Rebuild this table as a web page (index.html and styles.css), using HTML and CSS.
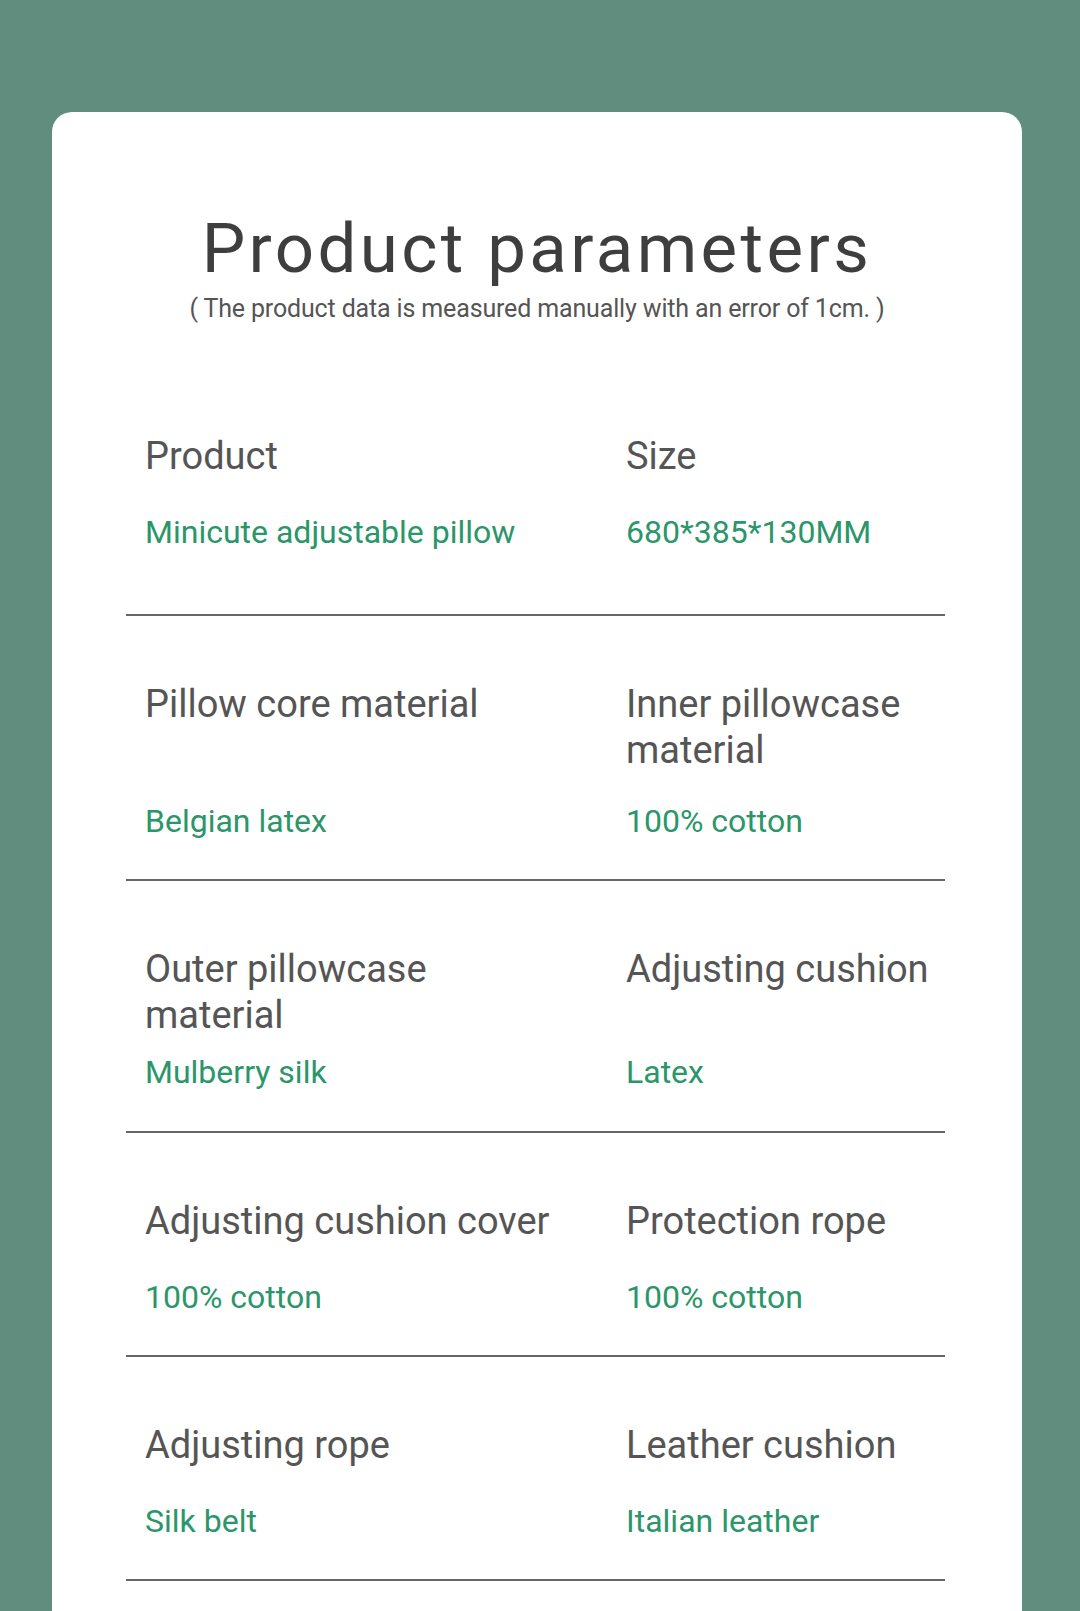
FILE: index.html
```html
<!DOCTYPE html>
<html lang="en">
<head>
<meta charset="utf-8">
<title>Product parameters</title>
<link rel="stylesheet" href="styles.css">
</head>
<body>
<div class="page">
  <main class="card">
    <header class="head">
      <h1 class="title">Product parameters</h1>
      <p class="note">( The product data is measured manually with an error of 1cm. )</p>
    </header>
    <section class="params">
      <div class="row row-first">
        <div class="label">Product</div>
        <div class="label">Size</div>
        <div class="value">Minicute adjustable pillow</div>
        <div class="value">680*385*130MM</div>
      </div>
      <div class="row row-second">
        <div class="label">Pillow core material</div>
        <div class="label">Inner pillowcase material</div>
        <div class="value">Belgian latex</div>
        <div class="value">100% cotton</div>
      </div>
      <div class="row row-third">
        <div class="label">Outer pillowcase material</div>
        <div class="label">Adjusting cushion</div>
        <div class="value">Mulberry silk</div>
        <div class="value">Latex</div>
      </div>
      <div class="row">
        <div class="label">Adjusting cushion cover</div>
        <div class="label">Protection rope</div>
        <div class="value">100% cotton</div>
        <div class="value">100% cotton</div>
      </div>
      <div class="row">
        <div class="label">Adjusting rope</div>
        <div class="label">Leather cushion</div>
        <div class="value">Silk belt</div>
        <div class="value">Italian leather</div>
      </div>
    </section>
  </main>
</div>
</body>
</html>
```
FILE: styles.css
```css
html, body {
  margin: 0;
  padding: 0;
}
body {
  background: #618d7f;
  font-family: Roboto, "Liberation Sans", sans-serif;
  height: 1611px;
  overflow: hidden;
}
.page {
  padding: 112px 58px 0 52px;
}
.card {
  background: #ffffff;
  border-radius: 20px 20px 0 0;
  min-height: 1499px;
  padding-top: 97px;
  box-sizing: border-box;
}
.head {
  text-align: center;
}
.title {
  margin: 0;
  font-size: 69px;
  line-height: 80px;
  font-weight: 400;
  letter-spacing: 3.4px;
  color: #3e3e3e;
}
.note {
  margin: 6px 0 0;
  font-size: 25px;
  line-height: 28px;
  color: #555555;
  letter-spacing: -0.15px;
}
.params {
  margin: 110px 0 0 74px;
  width: 819px;
}
.row {
  display: grid;
  grid-template-columns: 481px 1fr;
  row-gap: 33px;
  padding: 65px 0 38px 19px;
  border-bottom: 2px solid #666666;
}
.row-first {
  padding-top: 0;
  padding-bottom: 62px;
}
.row-second {
  row-gap: 28px;
}
.row-second .label:nth-child(2) {
  width: 300px;
}
.row-third {
  row-gap: 14px;
  padding-bottom: 39px;
}
.row-third .label:nth-child(1) {
  width: 300px;
}
.label {
  font-size: 38px;
  line-height: 46px;
  color: #555555;
}
.value {
  font-size: 32px;
  line-height: 40px;
  color: #2a966a;
}
```
